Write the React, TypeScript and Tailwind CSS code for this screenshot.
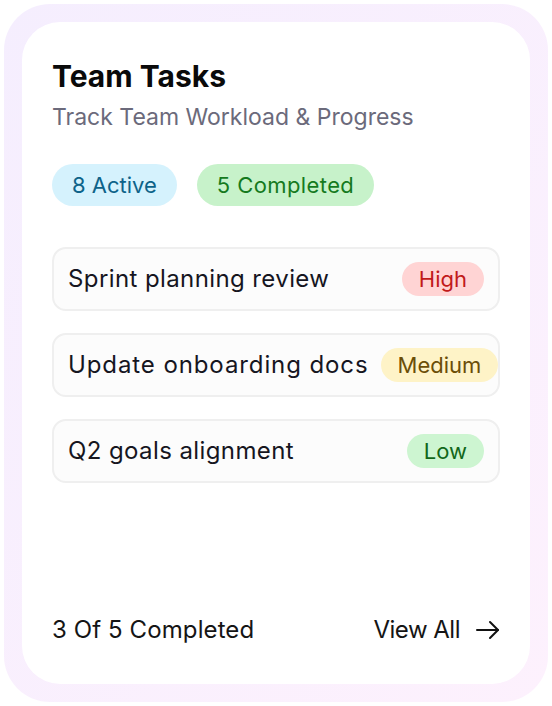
import React from "react";

const tasks = [
  { name: "Sprint planning review", p: "High", cls: "bg-[#ffd4d4] text-[#c11a1a]", t: "tracking-[0.4px]" },
  { name: "Update onboarding docs", p: "Medium", cls: "bg-[#fef3c7] text-[#6b4e07]", t: "tracking-[0.9px]" },
  { name: "Q2 goals alignment", p: "Low", cls: "bg-[#cdf5d1] text-[#11671a]", t: "tracking-[0.4px]" },
];

export default function App() {
  return (
    <div className="w-[552px] h-[706px] bg-white p-[4px]" style={{ fontFamily: "Inter, 'Noto Sans', sans-serif" }}>
      <div className="w-full h-full rounded-[46px] bg-gradient-to-br from-[#f5eefe] to-[#fdf1fd] p-[18px]">
        <div className="w-full h-full rounded-[38px] bg-white flex flex-col px-[30px] pt-[36px] pb-[38px]">
          <h1 className="text-[30px] leading-[36px] font-bold text-[#0a0a0a]">Team Tasks</h1>
          <p className="mt-[9px] text-[23px] leading-[28px] text-[#6b6a7b]">Track Team Workload &amp; Progress</p>
          <div className="mt-[33px] flex gap-[20px]">
            <span className="h-[42px] px-[20px] rounded-full bg-[#d5f2fd] text-[#0d6389] text-[22px] flex items-center">8 Active</span>
            <span className="h-[42px] px-[20px] rounded-full bg-[#c7f2ca] text-[#157a1e] text-[22px] flex items-center tracking-[0.4px]">5 Completed</span>
          </div>
          <div className="mt-[41px] flex flex-col gap-[22px]">
            {tasks.map((t) => (
              <div key={t.name} className="h-[64px] rounded-[14px] border-2 border-[#efefef] bg-[#fcfcfc] flex items-center justify-between gap-[12px] pl-[14px] pr-[14px]">
                <span className={`text-[24px] text-[#16161f] whitespace-nowrap ${t.t}`}>{t.name}</span>
                <span className={`h-[34px] px-[17px] rounded-full text-[22px] flex items-center whitespace-nowrap shrink-0 ${t.cls}`}>{t.p}</span>
              </div>
            ))}
          </div>
          <div className="mt-auto flex items-center justify-between">
            <span className="text-[24px] leading-[32px] text-[#151515] tracking-[0.1px]">3 Of 5 Completed</span>
            <span className="flex items-center gap-[15px] text-[24px] leading-[32px] text-[#151515] tracking-[-0.5px]">
              View All
              <svg width="25" height="24" viewBox="0 0 25 24" fill="none" stroke="#111" strokeWidth="2" strokeLinecap="round" strokeLinejoin="round">
                <path d="M2 12h21" />
                <path d="M15 4l8 8-8 8" />
              </svg>
            </span>
          </div>
        </div>
      </div>
    </div>
  );
}
